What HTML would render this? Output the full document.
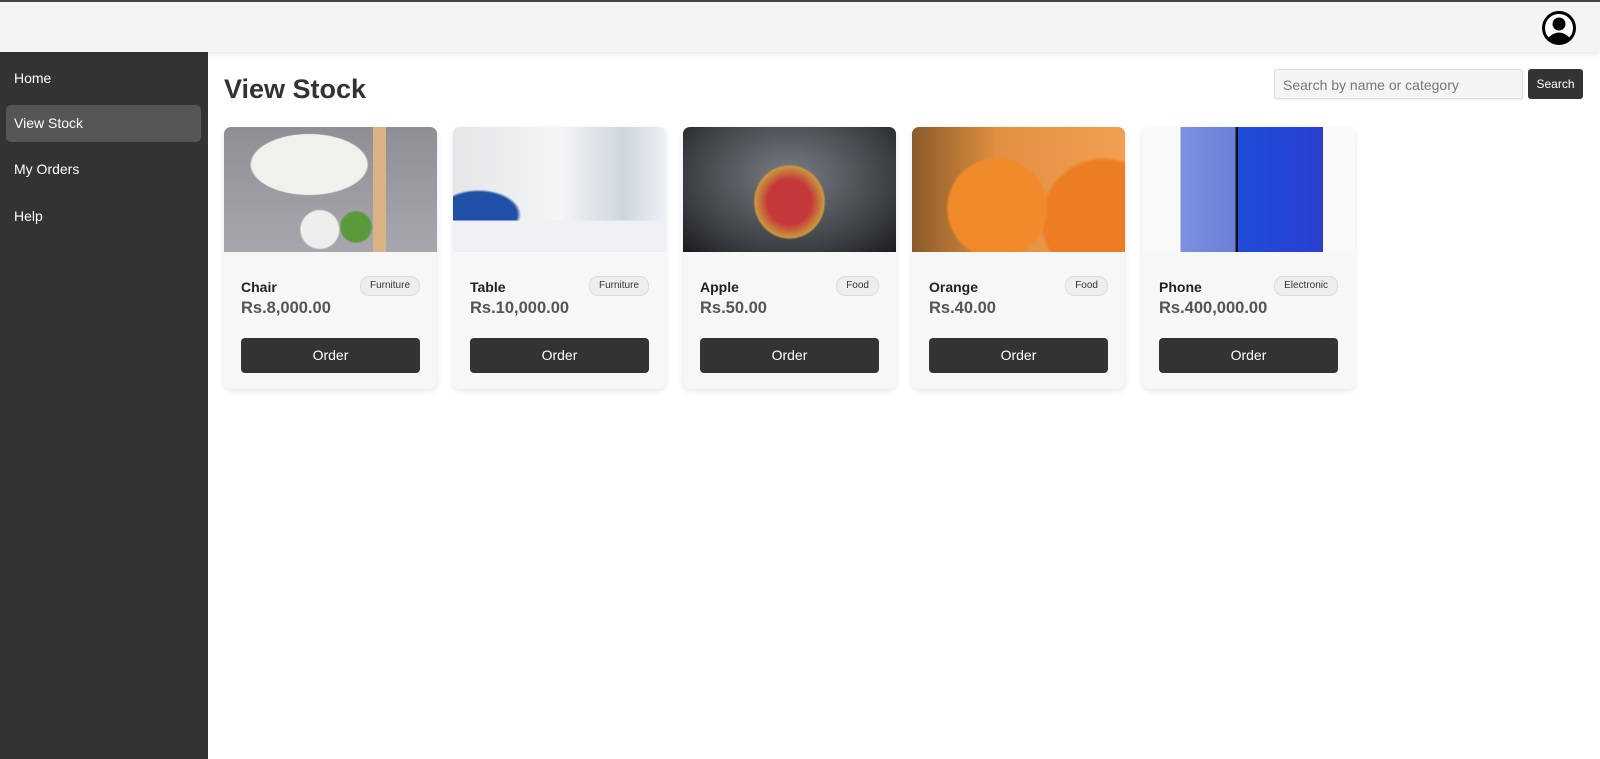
<!DOCTYPE html>
<html><head><meta charset="utf-8"><style>
*{box-sizing:border-box;margin:0;padding:0}
body{width:1600px;height:759px;overflow:hidden;font-family:"Liberation Sans",Arial,sans-serif;background:#fff;position:relative}
.top{position:absolute;left:0;top:0;width:1600px;height:52px;background:#f4f4f4;border-top:2px solid #444;box-shadow:0 2px 5px rgba(0,0,0,.1);z-index:2}
.av{position:absolute;left:1542px;top:9px}
.side{position:absolute;left:0;top:52px;width:208px;height:707px;background:#333}
.side div{position:absolute;left:6px;width:195px;height:37px;color:#fff;font-size:14px;line-height:37px;padding-left:8px;border-radius:5px}
.side .act{background:#555}
h1{position:absolute;left:224px;top:74px;font-size:27px;font-weight:bold;color:#333}
.search{position:absolute;left:1274px;top:69px;width:249px;height:30px;border:1px solid #ddd;border-radius:3px;background:#f4f4f4;font-size:14px;color:#777;padding:7px 8px;box-shadow:0 1px 2px rgba(0,0,0,.08)}
.sbtn{position:absolute;left:1528px;top:69px;width:55px;height:30px;background:#333;color:#fff;border-radius:3px;font-size:12px;text-align:center;line-height:30px}
.card{position:absolute;top:127px;width:213px;height:262px;background:#f7f7f7;border-radius:7px;box-shadow:0 2px 6px rgba(0,0,0,.1);overflow:hidden}
.img{height:125px;width:100%}
.name{position:absolute;left:17px;top:152px;font-size:14px;font-weight:bold;color:#222}
.tag{position:absolute;right:17px;top:149px;height:20px;padding:0 9px;border:1px solid #ddd;border-radius:9px;background:#eee;font-size:10px;line-height:18px;color:#333}
.price{position:absolute;left:17px;top:172px;font-size:16.5px;font-weight:bold;color:#555}
.btn{position:absolute;left:17px;top:211px;width:179px;height:35px;background:#333;border-radius:4px;color:#fff;font-size:14px;text-align:center;line-height:35px}
</style></head><body>
<div class="top"><svg class="av" width="34" height="34" viewBox="0 0 34 34"><circle cx="17" cy="17" r="15.5" fill="#fff" stroke="#000" stroke-width="3"/><circle cx="17" cy="13" r="6.5" fill="#000"/><path d="M6 27 Q17 16 28 27 Q17 36 6 27Z" fill="#000"/></svg></div>
<div class="side">
<div style="top:8px">Home</div>
<div class="act" style="top:53px">View Stock</div>
<div style="top:99px">My Orders</div>
<div style="top:146px">Help</div>
</div>
<h1>View Stock</h1>
<div class="search">Search by name or category</div>
<div class="sbtn">Search</div>

<div class="card" style="left:224px"><div class="img" style="background:radial-gradient(ellipse 45% 40% at 40% 30%,#f2f0ec 60%,transparent 62%),linear-gradient(90deg,transparent 70%,#d9b285 70%,#d9b285 76%,transparent 76%),radial-gradient(circle at 45% 82%,#eee 12%,transparent 13%),radial-gradient(circle at 62% 80%,#5a9a3a 9%,transparent 10%),linear-gradient(#8e8e94,#a7a7ad)"></div>
<div class="name">Chair</div><div class="tag">Furniture</div><div class="price">Rs.8,000.00</div><div class="btn">Order</div></div>

<div class="card" style="left:453px"><div class="img" style="background:linear-gradient(180deg,transparent 75%,#eef0f3 75%),radial-gradient(ellipse 20% 20% at 12% 70%,#1f4fa6 90%,transparent 100%),linear-gradient(90deg,#e3e5e8,#f4f5f6 50%,#cfd6de 80%,#eef1f4)"></div>
<div class="name">Table</div><div class="tag">Furniture</div><div class="price">Rs.10,000.00</div><div class="btn">Order</div></div>

<div class="card" style="left:683px"><div class="img" style="background:radial-gradient(ellipse 17% 30% at 50% 60%,#c4383a 60%,#c9973e 95%,transparent 100%),radial-gradient(ellipse at 50% 40%,#7a7e84,#3a3d42 70%,#1a1b1e)"></div>
<div class="name">Apple</div><div class="tag">Food</div><div class="price">Rs.50.00</div><div class="btn">Order</div></div>

<div class="card" style="left:912px"><div class="img" style="background:radial-gradient(circle at 40% 65%,#f08a2a 32%,transparent 34%),radial-gradient(circle at 90% 75%,#ec7d22 28%,transparent 30%),linear-gradient(90deg,#8a5a2a,#e09040 40%,#f0a050)"></div>
<div class="name">Orange</div><div class="tag">Food</div><div class="price">Rs.40.00</div><div class="btn">Order</div></div>

<div class="card" style="left:1142px"><div class="img" style="background:linear-gradient(90deg,#f9f9f9 18%,#7e8fe0 18%,#6a7fd8 44%,#111 44%,#111 45%,#1f4cd8 45%,#2a3fd0 85%,#f9f9f9 85%)"></div>
<div class="name">Phone</div><div class="tag">Electronic</div><div class="price">Rs.400,000.00</div><div class="btn">Order</div></div>
</body></html>
